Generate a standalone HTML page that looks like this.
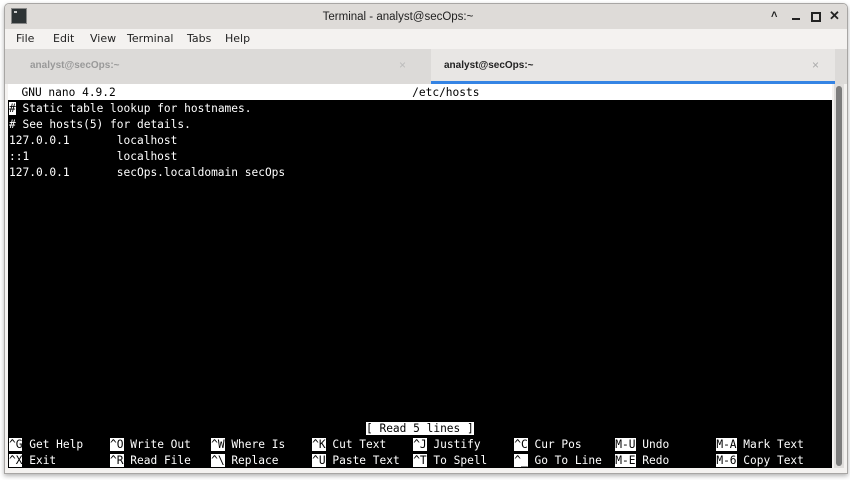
<!DOCTYPE html>
<html><head><meta charset="utf-8"><style>
body{margin:0;width:850px;height:480px;background:#fff;position:relative;overflow:hidden;font-family:"Liberation Sans",sans-serif}
.win{position:absolute;left:4px;top:3px;width:842px;height:469px;background:#f4f2f0;border:1px solid #a8a6a4;border-radius:5px 5px 0 0;box-shadow:0 2px 5px rgba(0,0,0,.3);overflow:hidden}
.title{position:absolute;left:0;top:0;width:786px;height:25px;background:none;font-size:11.5px;color:#222;text-align:center;line-height:26px}
.tbg{position:absolute;left:0;top:0;width:842px;height:25px;background:#dedbd8}
.menu span{position:absolute;top:25px;height:20px;font-family:"DejaVu Sans",sans-serif;font-size:11px;color:#222;line-height:20px}
.tabs{position:absolute;left:0;top:45px;width:842px;height:35px;background:#dcdad8}
.tab2{position:absolute;left:426px;top:0;width:404px;height:32px;background:#e8e6e4;border-bottom:3px solid #3584e4}
.tt{position:absolute;top:11px;font-family:"Liberation Sans",sans-serif;font-size:11px;font-weight:bold}
.term{position:absolute;left:8px;top:84px;width:824px;height:384px;background:#000;font-family:"DejaVu Sans Mono","Liberation Mono",monospace;font-size:11.2px;color:#fff}
.r{position:absolute;left:1px;height:16px;line-height:18px;white-space:pre}
.inv{background:#fff;color:#000}
.sb{position:absolute;left:834px;top:84px;width:10px;height:384px;background:#e0dedc}
.sb i{position:absolute;left:2px;top:2px;width:6px;height:380px;background:#7c7c7c;border-radius:3px}
</style></head><body>
<div class="win">
<div class="tbg"></div>
<div class="title">Terminal - analyst@secOps:~</div>
<div style="position:absolute;left:6px;top:4px;width:14px;height:14px;background:#2e3436;border:1px solid #888"><div style="position:absolute;left:2px;top:2px;width:3px;height:2px;background:#ccc"></div></div>
<div style="position:absolute;left:766px;top:5px;font-size:11px;font-weight:bold;color:#222">&#708;</div>
<div style="position:absolute;left:787px;top:14px;width:8px;height:2px;background:#222"></div>
<div style="position:absolute;left:806px;top:8px;width:6px;height:6px;border:2px solid #222"></div>
<div style="position:absolute;left:824px;top:4px;font-size:13px;font-weight:bold;color:#222">✕</div>
<div class="menu"><span style="left:11px">File</span><span style="left:48px">Edit</span><span style="left:85px">View</span><span style="left:122px">Terminal</span><span style="left:182px">Tabs</span><span style="left:220px">Help</span></div>
<div class="tabs">
<div class="tt" style="left:25px;color:#999;font-size:10px">analyst@secOps:~</div>
<div style="position:absolute;left:394px;top:9px;color:#bbb;font-size:12px">×</div>
<div class="tab2"><div class="tt" style="left:13px;color:#222;font-size:10px">analyst@secOps:~</div><div style="position:absolute;left:381px;top:9px;color:#aaa;font-size:12px">×</div></div>
</div>
</div>
<div class="term">
<div class="r inv" style="top:0;left:0;width:824px;line-height:17px">  GNU nano 4.9.2                                            /etc/hosts</div>
<div class="r" style="top:16px"><span class="inv">#</span> Static table lookup for hostnames.</div>
<div class="r" style="top:32px"># See hosts(5) for details.</div>
<div class="r" style="top:48px">127.0.0.1       localhost</div>
<div class="r" style="top:64px">::1             localhost</div>
<div class="r" style="top:80px">127.0.0.1       secOps.localdomain secOps</div>
<div class="r" style="top:336px">                                                     <span class="inv">[ Read 5 lines ]</span></div>
<div class="r" style="top:352px"><span class="inv">^G</span> Get Help    <span class="inv">^O</span> Write Out   <span class="inv">^W</span> Where Is    <span class="inv">^K</span> Cut Text    <span class="inv">^J</span> Justify     <span class="inv">^C</span> Cur Pos     <span class="inv">M-U</span> Undo       <span class="inv">M-A</span> Mark Text</div>
<div class="r" style="top:368px"><span class="inv">^X</span> Exit        <span class="inv">^R</span> Read File   <span class="inv">^\</span> Replace     <span class="inv">^U</span> Paste Text  <span class="inv">^T</span> To Spell    <span class="inv">^_</span> Go To Line  <span class="inv">M-E</span> Redo       <span class="inv">M-6</span> Copy Text</div>
</div>
<div class="sb"><i></i></div>
</body></html>
